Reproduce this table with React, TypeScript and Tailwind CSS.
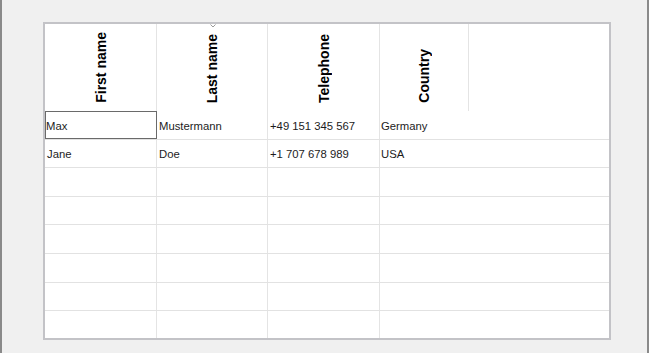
import React from 'react';

const columns = [
  { label: 'First name', width: 'w-[112px]' },
  { label: 'Last name', width: 'w-[111px]' },
  { label: 'Telephone', width: 'w-[112px]' },
  { label: 'Country', width: 'w-[89px]' },
];

const rows: string[][] = [
  ['Max', 'Mustermann', '+49 151 345 567', 'Germany'],
  ['Jane', 'Doe', '+1 707 678 989', 'USA'],
  ['', '', '', ''],
  ['', '', '', ''],
  ['', '', '', ''],
  ['', '', '', ''],
  ['', '', '', ''],
  ['', '', '', ''],
];

const bodyWidths = ['w-[112px]', 'w-[111px]', 'w-[112px]'];

export default function App() {
  return (
    <div
      className="w-[649px] h-[353px] bg-[#f0f0f0] border-l-2 border-r-2 border-[#8a8a8a] pl-[41px] pt-[22px]"
      style={{ fontFamily: '"Liberation Sans", Arial, sans-serif' }}
    >
      <div className="w-[568px] h-[318px] border-2 border-[#c3c3c7] bg-white flex flex-col overflow-hidden">
        {/* Header */}
        <div className="flex h-[87px] shrink-0 relative">
          {columns.map((c) => (
            <div
              key={c.label}
              className={`${c.width} shrink-0 border-r border-[#e4e4e4] flex items-end justify-center pb-[8px]`}
            >
              <span className="[writing-mode:vertical-rl] rotate-180 text-[14px] font-bold text-black leading-none">
                {c.label}
              </span>
            </div>
          ))}
          <div className="flex-1" />
          <svg
            className="absolute left-[165px] top-0"
            width="6"
            height="4"
            viewBox="0 0 6 4"
          >
            <path d="M0.5 0.5 L3 3 L5.5 0.5" fill="none" stroke="#9a9a9a" strokeWidth="1" />
          </svg>
        </div>

        {/* Body */}
        {rows.map((r, i) => (
          <div key={i} className="flex h-[28.6px] shrink-0 border-b border-[#e2e2e2]">
            {r.map((v, j) =>
              j < 3 ? (
                <div
                  key={j}
                  className={`${bodyWidths[j]} shrink-0 flex items-center pt-[3px] text-[11.3px] text-[#1c1c1c] ${
                    i === 0 && j === 0 ? 'border border-[#6a6a6a] pl-0' : 'border-r border-[#e4e4e4] pl-[2px]'
                  }`}
                >
                  {v}
                </div>
              ) : (
                <div key={j} className="flex-1 flex items-center pl-[1px] pt-[3px] text-[11.3px] text-[#1c1c1c]">
                  {v}
                </div>
              )
            )}
          </div>
        ))}
      </div>
    </div>
  );
}
